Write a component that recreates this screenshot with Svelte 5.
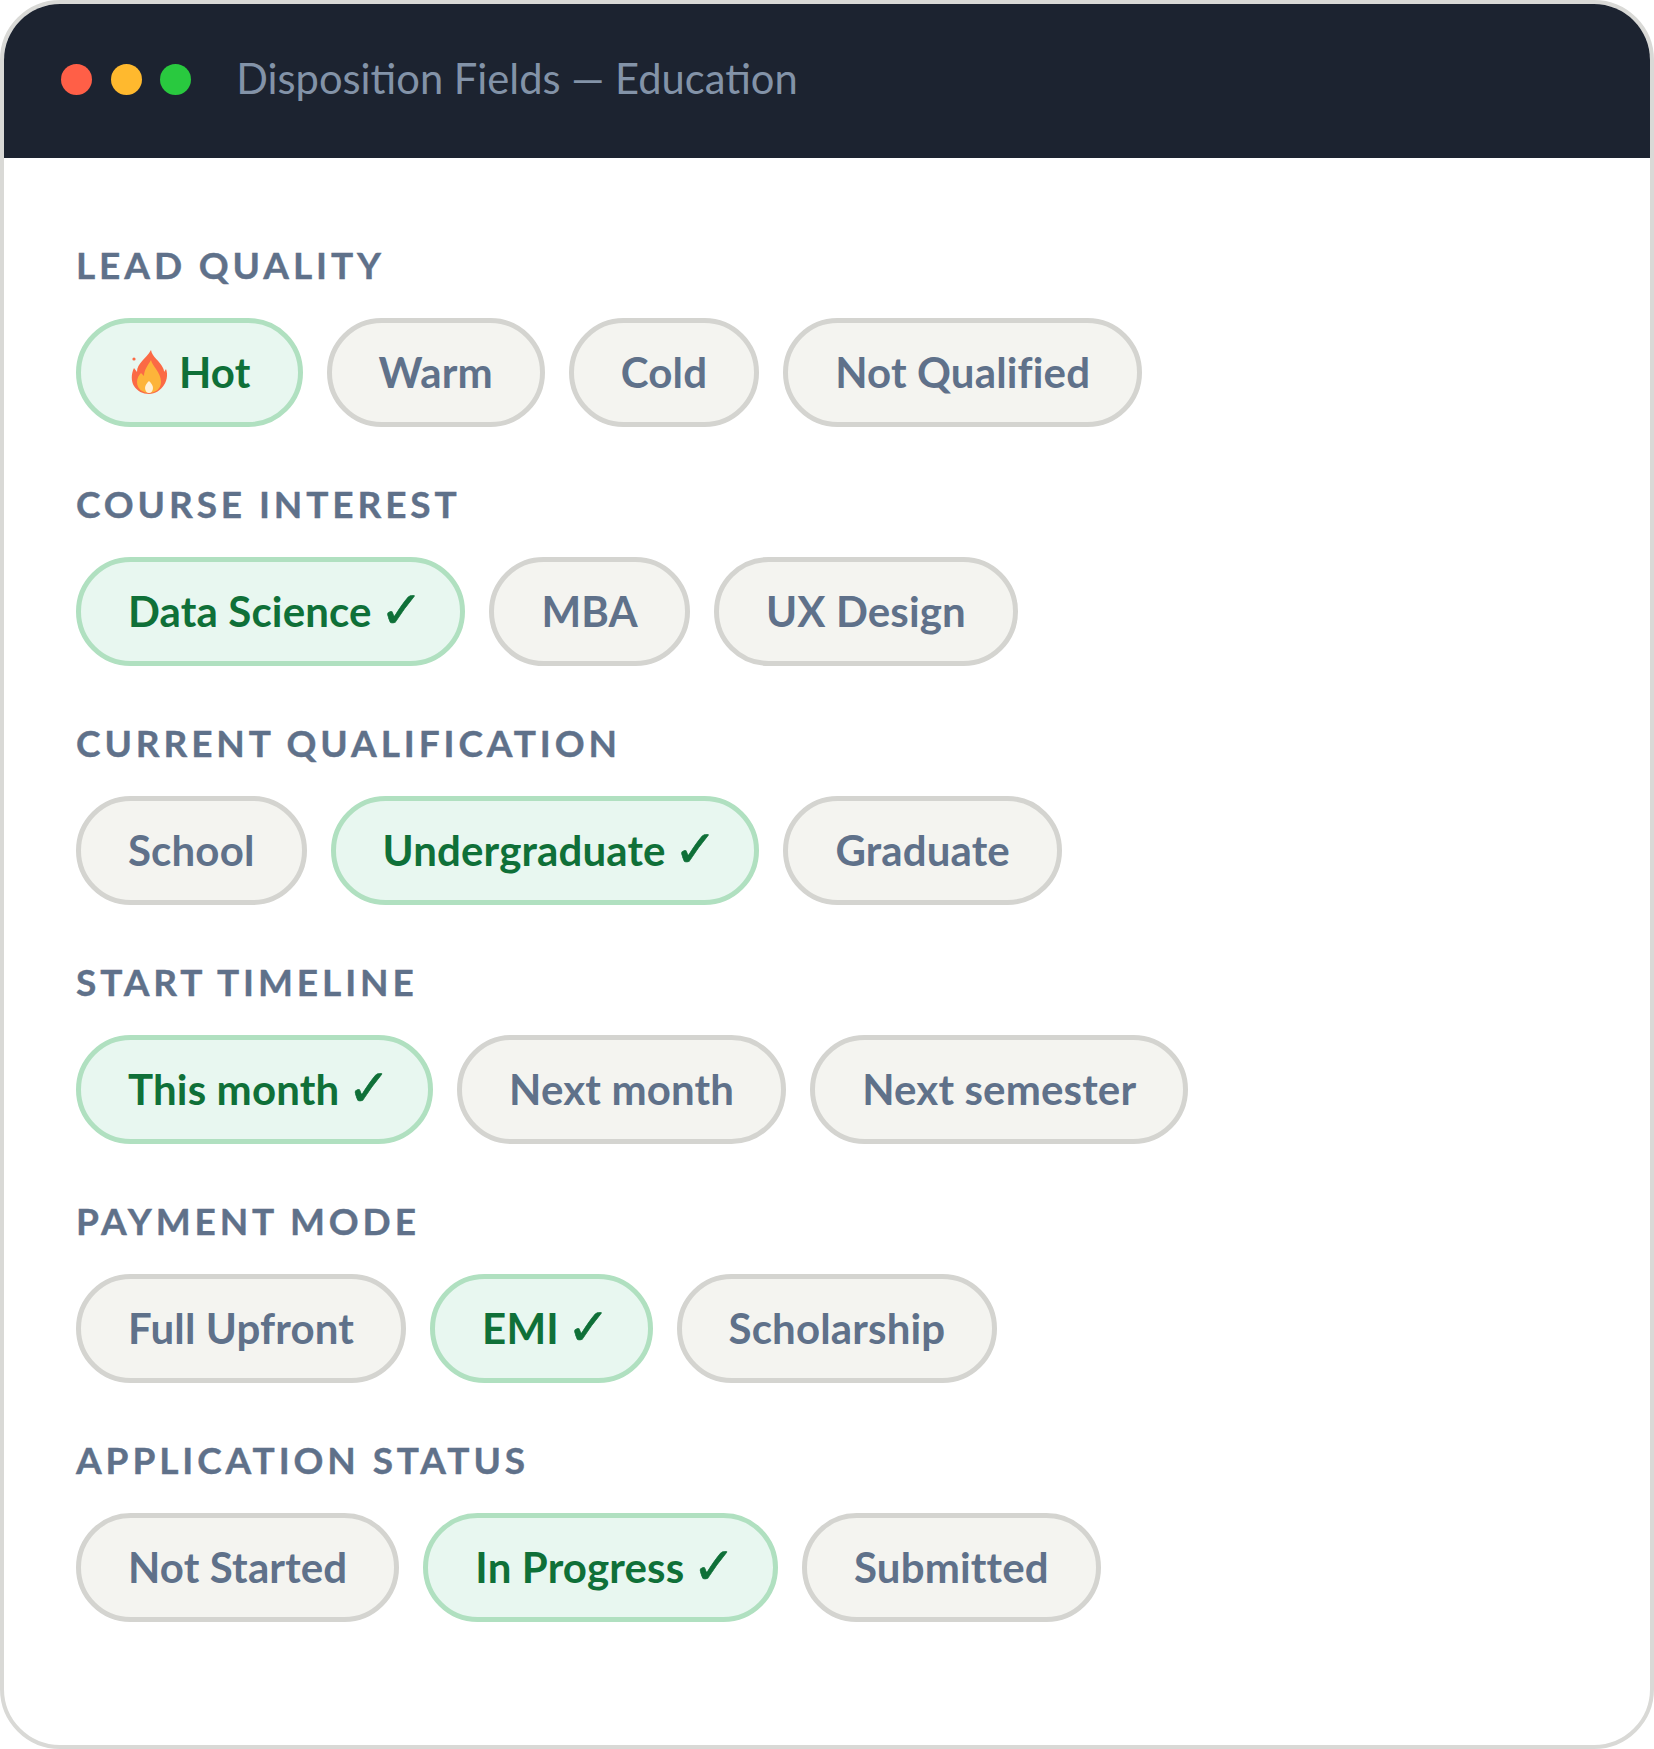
<script>
	const groups = [
		{ label: 'Lead Quality', options: [{ text: 'Hot', on: true, fire: true }, { text: 'Warm' }, { text: 'Cold' }, { text: 'Not Qualified' }] },
		{ label: 'Course Interest', options: [{ text: 'Data Science', on: true, tick: true }, { text: 'MBA' }, { text: 'UX Design' }] },
		{ label: 'Current Qualification', options: [{ text: 'School' }, { text: 'Undergraduate', on: true, tick: true }, { text: 'Graduate' }] },
		{ label: 'Start Timeline', options: [{ text: 'This month', on: true, tick: true }, { text: 'Next month' }, { text: 'Next semester' }] },
		{ label: 'Payment Mode', options: [{ text: 'Full Upfront' }, { text: 'EMI', on: true, tick: true }, { text: 'Scholarship' }] },
		{ label: 'Application Status', options: [{ text: 'Not Started' }, { text: 'In Progress', on: true, tick: true }, { text: 'Submitted' }] }
	];
</script>

<div class="window">
	<header class="titlebar">
		<div class="dots">
			<span class="dot red"></span>
			<span class="dot amber"></span>
			<span class="dot green"></span>
		</div>
		<span class="title">Disposition Fields — Education</span>
	</header>

	<main class="fields">
		{#each groups as group}
			<section class="field">
				<h3 class="field-label">{group.label}</h3>
				<div class="pills">
					{#each group.options as opt}
						<span class="pill" class:on={opt.on}>
							{#if opt.fire}
								<svg class="flame" viewBox="0 0 36 44" aria-hidden="true">
									<path fill="#fb6a45" d="M20 0c1 7 9 11 12 18 1 2 1 3 1 4l2-3c2 5 1 12-2 16-3 5-9 9-15 9S6 41 3 36c-3-5-3-12 0-18l3 4c0-9 9-13 14-22z" />
									<path fill="#fdb43a" d="M20 10c1 6 10 12 10 22 0 7-6 11-12 11S6 39 6 32c0-4 2-7 4-9l3 3c0-6 4-11 7-16z" />
									<path fill="#fff1d8" d="M18 31c2 2 4 4 4 7 0 3-2 5-4 5s-4-2-4-5c0-3 2-5 4-7z" />
									<circle fill="#fb6a45" cx="3" cy="9" r="1.6" />
								</svg>
							{/if}
							<span>{opt.text}</span>
							{#if opt.tick}
								<span class="tick">✓</span>
							{/if}
						</span>
					{/each}
				</div>
			</section>
		{/each}
	</main>
</div>

<style>
	:global(body) {
		margin: 0;
		background: #fff;
	}

	.window {
		box-sizing: border-box;
		width: 1654px;
		height: 1749px;
		border: 4px solid #d9d9d6;
		border-radius: 60px;
		overflow: hidden;
		background: #fff;
		font-family: Lato, 'Noto Sans', sans-serif;
	}

	.titlebar {
		box-sizing: border-box;
		display: flex;
		align-items: center;
		gap: 45px;
		height: 154px;
		padding: 0 0 3px 57px;
		background: #1c2330;
	}

	.dots {
		display: flex;
		gap: 18.6px;
	}

	.dot {
		width: 31px;
		height: 31px;
		border-radius: 50%;
	}

	.red {
		background: #ff5f47;
	}

	.amber {
		background: #ffb92e;
	}

	.green {
		background: #29c93f;
	}

	.title {
		margin-bottom: 3px;
		font-size: 41.7px;
		color: #8393a8;
	}

	.fields {
		display: flex;
		flex-direction: column;
		gap: 55px;
		padding: 85px 72px 0;
	}

	.field-label {
		margin: 0 0 31px;
		font-size: 37px;
		font-weight: 700;
		line-height: 44px;
		letter-spacing: 3.9px;
		-webkit-text-stroke: 0.4px #5f718a;
		text-transform: uppercase;
		color: #5f718a;
	}

	.pills {
		display: flex;
		gap: 24px;
	}

	.pill {
		box-sizing: border-box;
		display: inline-flex;
		align-items: center;
		gap: 11px;
		height: 109px;
		padding: 0 47px 1px;
		border: 5px solid #d4d4d0;
		border-radius: 55px;
		background: #f4f4f0;
		font-size: 42px;
		font-weight: 700;
		letter-spacing: 0.15px;
		color: #5f718a;
	}

	.pill.on {
		border-color: #b0e0c0;
		background: #e8f7f0;
		color: #0f7038;
	}

	.flame {
		width: 36px;
		height: 44px;
		margin: 0 1px 0 3px;
	}

	.tick {
		font-family: 'DejaVu Sans', sans-serif;
		font-size: 52px;
		line-height: 1;
		margin: -2px -10px 0 -3px;
		-webkit-text-stroke: 0.6px #0f7038;
	}
</style>
